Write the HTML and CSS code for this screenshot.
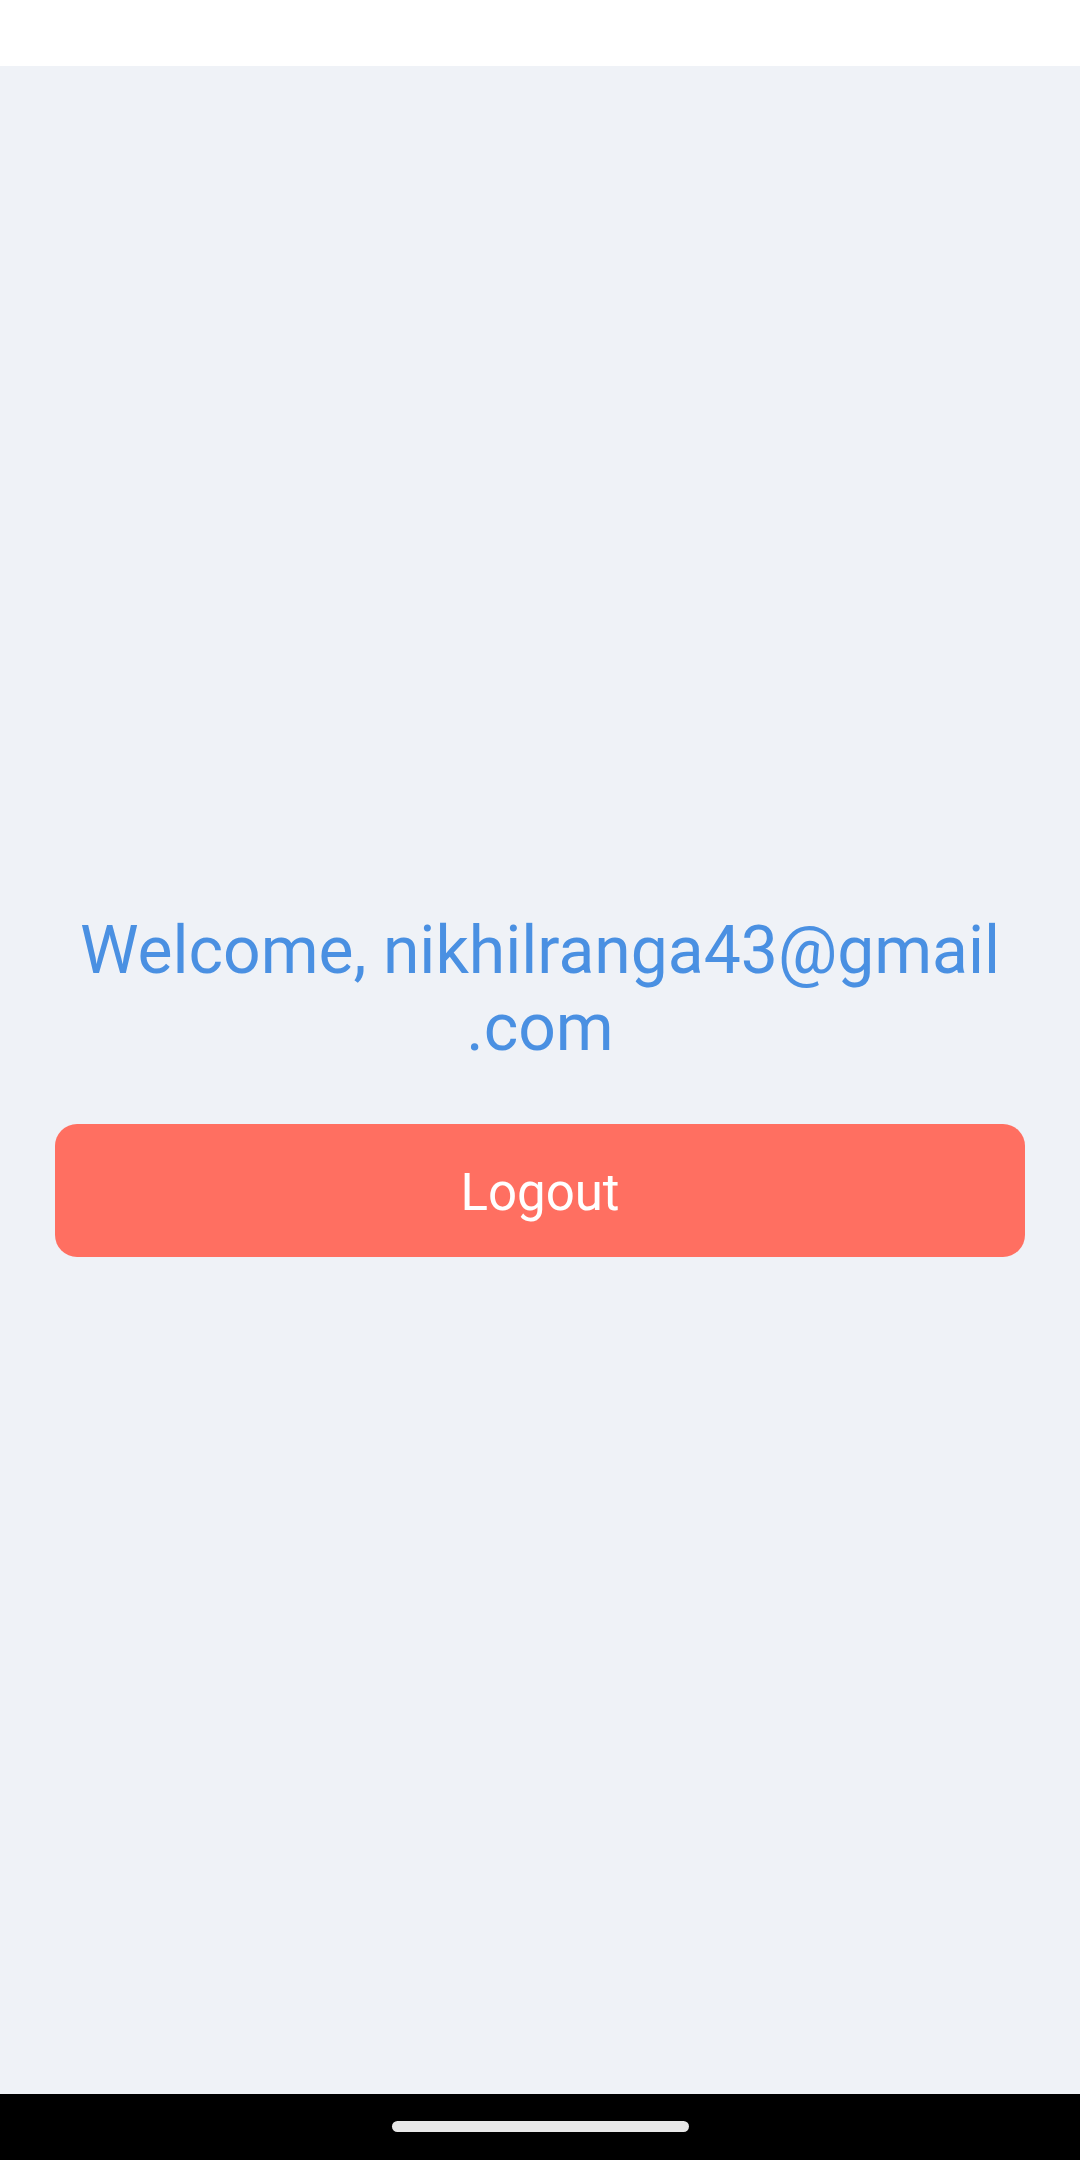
FILE: index.html
```html
<!DOCTYPE html>
<html lang="en">
<head>
<meta charset="utf-8">
<title>Welcome</title>
<link rel="stylesheet" href="styles.css">
</head>
<body>
<div class="screen">
  <div class="status-bar"></div>
  <main class="content">
    <div class="welcome-block">
      <p class="welcome-text">Welcome, nikhilranga43@gmail<wbr>.com</p>
      <button class="logout-btn" type="button">Logout</button>
    </div>
  </main>
  <div class="nav-bar"><span class="home-pill"></span></div>
</div>
</body>
</html>
```

FILE: styles.css
```css
html, body {
  margin: 0;
  padding: 0;
}
body {
  font-family: Roboto, "Noto Sans", "Liberation Sans", sans-serif;
  background: #eff2f7;
}
.screen {
  width: 1080px;
  height: 2160px;
  display: flex;
  flex-direction: column;
}
.status-bar {
  height: 66px;
  background: #ffffff;
  flex: none;
}
.content {
  flex: 1;
  background: #eff2f7;
  display: flex;
  flex-direction: column;
  justify-content: center;
  padding: 9px 55px 0;
}
.welcome-block {
  display: flex;
  flex-direction: column;
}
.welcome-text {
  margin: 0 0 58px;
  font-size: 66px;
  line-height: 77px;
  color: #4a90e2;
  text-align: center;
}
.logout-btn {
  height: 133px;
  border: none;
  border-radius: 22px;
  background: #ff6f61;
  color: #ffffff;
  font-family: Roboto, "Noto Sans", "Liberation Sans", sans-serif;
  font-size: 51px;
  padding: 4px 0 0;
  box-sizing: border-box;
  display: flex;
  align-items: center;
  justify-content: center;
}
.nav-bar {
  height: 66px;
  background: #000000;
  flex: none;
  display: flex;
  justify-content: center;
  padding-top: 27px;
  box-sizing: border-box;
}
.home-pill {
  width: 297px;
  height: 11px;
  border-radius: 6px;
  background: #e8e8e8;
}
```
